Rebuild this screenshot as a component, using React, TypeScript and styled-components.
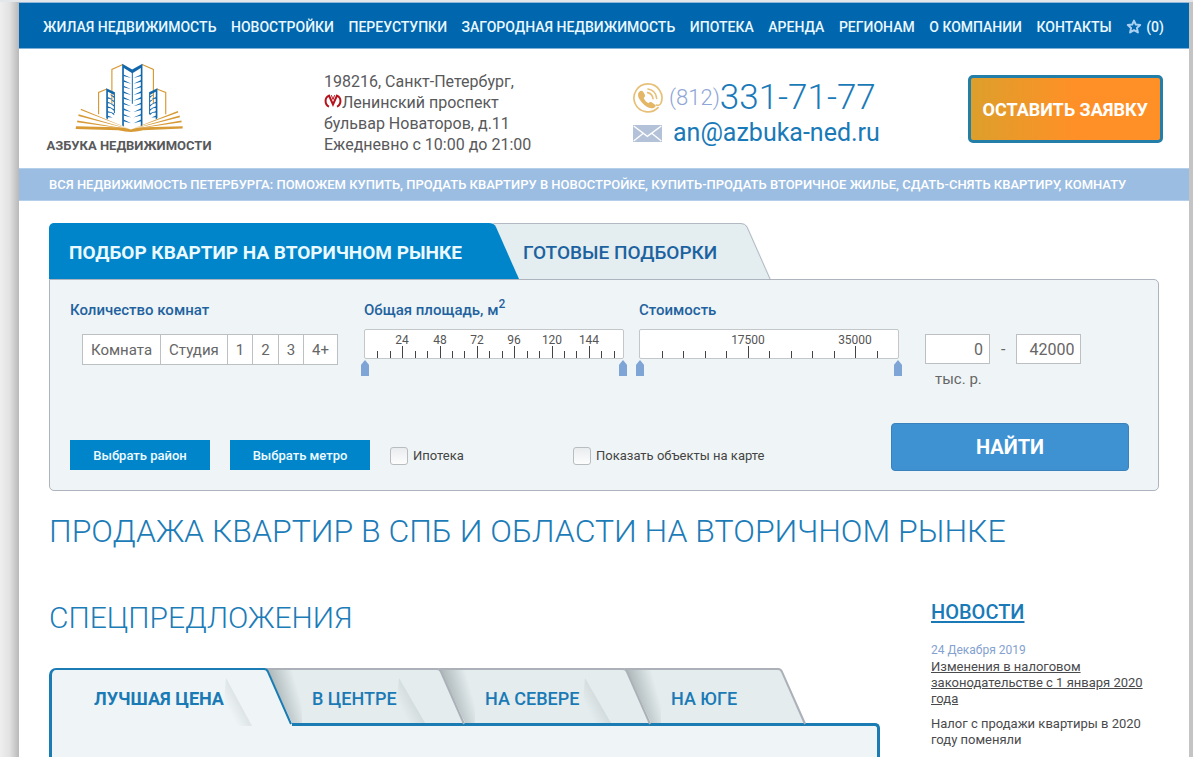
import React, { useState } from "react";
import styled, { createGlobalStyle, css } from "styled-components";

const GlobalStyle = createGlobalStyle`
  *, *::before, *::after { box-sizing: border-box; }
  body {
    margin: 0;
    background: #fff;
    color: #58595b;
    font-family: Roboto, "Liberation Sans", sans-serif;
    font-size: 16px;
  }
  button, input { font-family: inherit; }
  button { cursor: pointer; }
`;

const Shell = styled.div`
  min-height: 100vh;
  display: grid;
  grid-template-columns: 19px minmax(0, 1fr) 4px;
  border-top: 2px solid #e4e7ea;
`;

const LeftEdge = styled.div`
  background: linear-gradient(90deg, #efefef, #e2e2e2 50%, #b9b9b9);
`;

const RightEdge = styled.div`
  background: #c4c4c4;
`;

const Page = styled.div`
  display: flex;
  flex-direction: column;
  background: #fff;
`;

const Nav = styled.nav`
  display: flex;
  align-items: center;
  justify-content: space-between;
  height: 47px;
  padding: 2px 25px 0 24px;
  background: #0066ad;
  border-top: 1px solid #8fb8dc;
  border-bottom: 1px solid #7fb0d8;
`;

const NavLink = styled.a`
  display: flex;
  align-items: center;
  gap: 4px;
  color: #e9f8ff;
  font-size: 14px;
  font-weight: 500;
  text-decoration: none;
  white-space: nowrap;
`;

const Header = styled.header`
  display: grid;
  grid-template-columns: 275px 309px 1fr auto;
  align-items: start;
  height: 119px;
  padding: 14px 26px 0 30px;
`;

const Logo = styled.a`
  display: flex;
  flex-direction: column;
  align-items: center;
  width: 160px;
  gap: 4px;
  color: #58595b;
  font-size: 13px;
  line-height: 18px;
  font-weight: 700;
  text-decoration: none;
  white-space: nowrap;
`;

const Address = styled.address`
  padding-top: 8px;
  font-style: normal;
  font-size: 16px;
  line-height: 21px;
`;

const Contacts = styled.div`
  display: grid;
  grid-template-columns: 30px 1fr;
  align-items: center;
  column-gap: 6px;
  padding-top: 16px;
`;

const Phone = styled.a`
  display: flex;
  align-items: center;
  color: #1a7ab8;
  font-size: 35px;
  line-height: 38px;
  font-weight: 300;
  text-decoration: none;
  white-space: nowrap;
`;

const AreaCode = styled.span`
  color: #8fa6d6;
  font-size: 22px;
`;

const Mail = styled.a`
  padding-left: 4px;
  color: #1a7ab8;
  font-size: 25px;
  line-height: 32px;
  text-decoration: none;
`;

const RequestButton = styled.button`
  height: 68px;
  margin-top: 12px;
  padding: 0 12px;
  border: 3px solid #237fa8;
  border-radius: 5px;
  background: linear-gradient(90deg, #dd9f2b, #ff9027 55%);
  color: #fff;
  font-size: 18px;
  font-weight: 700;
  white-space: nowrap;
`;

const Strip = styled.p`
  margin: 0;
  min-height: 33px;
  padding: 0 30px;
  border-top: 1px solid #b4cfe9;
  border-bottom: 1px solid #b4cfe9;
  background: #9bbde2;
  color: #fff;
  font-size: 13px;
  line-height: 31px;
  font-weight: 500;
`;

const Content = styled.main`
  display: flex;
  flex-direction: column;
  flex: 1;
  padding: 22px 30px 0;
`;

const SearchTabs = styled.div`
  display: flex;
  height: 56px;
`;

const SearchTab = styled.button<{ $active?: boolean }>`
  position: relative;
  z-index: ${(p) => (p.$active ? 1 : 0)};
  display: flex;
  padding: 0;
  border: 0;
  background: none;
  font-size: 19px;
  font-weight: ${(p) => (p.$active ? 700 : 500)};
  line-height: 60px;
  white-space: nowrap;
  color: ${(p) => (p.$active ? "#eafaff" : "#1c62a0")};
  & + & { margin-left: -29px; }
`;

const SearchTabLabel = styled.span<{ $active?: boolean }>`
  height: 56px;
  border-radius: 5px 0 0 0;
  text-align: left;
  ${(p) =>
    p.$active
      ? css`
          width: 440px;
          padding-left: 20px;
          background: #0085cb;
        `
      : css`
          width: 251px;
          padding-left: 33px;
          background: #e4edef;
          border-top: 1px solid #b3b9c3;
          line-height: 58px;
        `}
`;

const SearchPanel = styled.form`
  display: grid;
  row-gap: 34px;
  padding: 20px 29px 19px 20px;
  border: 1px solid #aeb4bd;
  border-radius: 0 5px 5px 5px;
  background: #eff5f6;
`;

const Filters = styled.div`
  display: grid;
  grid-template-columns: 274px 260px 1fr;
  column-gap: 20px;
  & > :nth-child(3) { margin-left: -5px; }
`;

const Fieldset = styled.fieldset`
  min-width: 0;
  margin: 0;
  padding: 0;
  border: 0;
`;

const Legend = styled.legend`
  height: 29px;
  padding: 0;
  color: #1f629f;
  font-size: 15px;
  line-height: 20px;
  font-weight: 500;
  sup {
    font-size: 12px;
    line-height: 0;
    vertical-align: 7px;
  }
`;

const Rooms = styled.div`
  display: flex;
  width: max-content;
  margin: 5px 0 0 12px;
  border: 1px solid #bcc0c3;
  background: #fff;
`;

const Room = styled.button`
  height: 29px;
  padding: 0 8px;
  border: 0;
  background: #fff;
  color: #666;
  font-size: 15px;
  & + & { border-left: 1px solid #bcc0c3; }
  &[aria-pressed="true"] { background: #dbe9f6; }
`;

const PriceRow = styled.div`
  display: flex;
  gap: 26px;
`;

const RangeBox = styled.div`
  width: 260px;
`;

const Scale = styled.svg`
  display: block;
  width: 260px;
  height: 30px;
  background: #fff;
  border: 1px solid #c3c7ca;
  border-radius: 2px;
`;

const Thumbs = styled.div`
  display: grid;
  margin: 1px -3px 0;
`;

const thumb = css`
  appearance: none;
  width: 8px;
  height: 16px;
  border: 0;
  border-radius: 0;
  background: #7fa5d6;
  clip-path: polygon(0 30%, 50% 0, 100% 30%, 100% 100%, 0 100%);
  pointer-events: auto;
`;

const Thumb = styled.input`
  grid-area: 1 / 1;
  appearance: none;
  width: 100%;
  height: 16px;
  margin: 0;
  background: none;
  pointer-events: none;
  &::-webkit-slider-thumb { ${thumb} }
  &::-moz-range-thumb { ${thumb} }
`;

const PriceInputs = styled.div`
  padding-top: 5px;
`;

const PriceFields = styled.div`
  display: flex;
  align-items: center;
  gap: 11px;
  color: #666;
`;

const PriceInput = styled.input`
  width: 65px;
  height: 30px;
  padding: 0 6px;
  border: 1px solid #bcc0c3;
  background: #fff;
  color: #666;
  font-size: 16px;
  text-align: right;
`;

const Unit = styled.div`
  padding: 5px 0 0 10px;
  color: #666;
  font-size: 15px;
  line-height: 20px;
`;

const Actions = styled.div`
  display: flex;
  align-items: flex-start;
`;

const PickButton = styled.button`
  width: 140px;
  height: 30px;
  margin: 17px 20px 0 0;
  padding: 0;
  border: 0;
  background: #0085cb;
  color: #effaff;
  font-size: 13px;
  font-weight: 500;
`;

const CheckLabel = styled.label<{ $grow?: boolean }>`
  display: flex;
  align-items: center;
  gap: 5px;
  padding-top: 22px;
  color: #444;
  font-size: 13px;
  line-height: 21px;
  ${(p) => (p.$grow ? "flex: 1;" : "width: 183px;")}
`;

const Check = styled.input`
  appearance: none;
  width: 18px;
  height: 18px;
  margin: 0;
  border: 1px solid #b9bdc0;
  border-radius: 3px;
  background: linear-gradient(#e9ecee, #fdfdfd);
  &:checked { background: #7fa5d6; }
`;

const FindButton = styled.button`
  width: 238px;
  height: 48px;
  padding: 0;
  border: 1px solid #3a82bb;
  border-radius: 4px;
  background: #3e92d2;
  color: #fff;
  font-size: 20px;
  font-weight: 700;
`;

const Title = styled.h1`
  margin: 20px 0 0;
  color: #1c7cb8;
  font-size: 32px;
  line-height: 40px;
  font-weight: 300;
`;

const Columns = styled.div`
  display: grid;
  grid-template-columns: minmax(0, 831px) 228px;
  justify-content: space-between;
  flex: 1;
  margin-top: 47px;
`;

const Offers = styled.section`
  display: flex;
  flex-direction: column;
`;

const SectionTitle = styled.h2`
  margin: 0;
  color: #1c7cb8;
  font-size: 30px;
  line-height: 40px;
  font-weight: 300;
`;

const OfferTabs = styled.div`
  display: flex;
  height: 55px;
  margin-top: 30px;
`;

const OfferTab = styled.button<{ $active?: boolean; $layer: number }>`
  position: relative;
  z-index: ${(p) => p.$layer};
  display: flex;
  height: ${(p) => (p.$active ? 58 : 55)}px;
  padding: 0;
  border: 0;
  background: none;
  color: #1a7ab5;
  font-size: 18px;
  font-weight: ${(p) => (p.$active ? 700 : 500)};
  white-space: nowrap;
  & + & { margin-left: -28px; }
`;

const OfferLabel = styled.span<{ $active?: boolean; $width: number }>`
  width: ${(p) => p.$width}px;
  height: 100%;
  padding-left: ${(p) => (p.$active ? 42 : 48)}px;
  text-align: left;
  line-height: 58px;
  background: ${(p) => (p.$active ? "#eff5f6" : "#e4ecee")};
  border-top: 2px solid ${(p) => (p.$active ? "#1a7cb2" : "#acb1b9")};
  ${(p) =>
    p.$active &&
    css`
      border-left: 3px solid #1a7cb2;
      border-radius: 7px 0 0 0;
    `}
`;

const Slant = styled.svg`
  flex: none;
  overflow: visible;
  pointer-events: none;
`;

const OfferPanel = styled.div`
  flex: 1;
  min-height: 32px;
  border: 3px solid #1a7cb2;
  border-bottom: 0;
  border-radius: 0 5px 0 0;
  background: #eff5f6;
`;

const News = styled.aside`
  color: #4a4a4c;
  font-size: 13px;
  line-height: 16px;
`;

const NewsTitle = styled.h2`
  margin: 0;
  font-size: 20px;
  line-height: 28px;
  font-weight: 500;
  a {
    color: #1a7ab8;
    text-underline-offset: 2px;
  }
`;

const NewsDate = styled.time`
  display: block;
  margin-top: 15px;
  color: #84a1d0;
  font-size: 12px;
  line-height: 18px;
`;

const NewsLink = styled.a`
  color: #4a4a4c;
`;

const NewsText = styled.p`
  margin: 9px 0 0;
`;

const navItems = [
  "ЖИЛАЯ НЕДВИЖИМОСТЬ",
  "НОВОСТРОЙКИ",
  "ПЕРЕУСТУПКИ",
  "ЗАГОРОДНАЯ НЕДВИЖИМОСТЬ",
  "ИПОТЕКА",
  "АРЕНДА",
  "РЕГИОНАМ",
  "О КОМПАНИИ",
  "КОНТАКТЫ",
];

const rooms = ["Комната", "Студия", "1", "2", "3", "4+"];

const offerTabs = [
  { name: "ЛУЧШАЯ ЦЕНА", width: 215 },
  { name: "В ЦЕНТРЕ", width: 173 },
  { name: "НА СЕВЕРЕ", width: 186 },
  { name: "НА ЮГЕ", width: 155 },
];

/* Floors of a tower: short wedges that lean towards its middle rib. */
function floors(xs: number, xe: number, top: number, count: number, step: number, drop: number) {
  return Array.from({ length: count }, (_, i) => {
    const y = top + i * step;
    return `M${xs} ${y}L${xe} ${y + drop}L${xs} ${y + 5}Z`;
  }).join("");
}

function LogoMark() {
  return (
    <svg width="108" height="70" viewBox="105 38 325 210" aria-hidden="true">
      <g fill="none" stroke="#d79a35" strokeWidth="3.5">
        <path d="M216 160V57L249 42" />
        <path d="M341 160V57L307 42" />
        <path d="M176 192V126L201 116" />
        <path d="M378 192V126L351 116" />
      </g>
      <g fill="#1267ab">
        <path d="M247 40L277 57L308 40V226L303 229V53L279 68V160H276V68L252 53V229L247 226Z" />
        <path d={floors(251, 274, 72, 9, 17, 11)} />
        <path d={floors(304, 281, 72, 9, 17, 11)} />
        <path d="M199 114L225 126V188H222V133L204 124V208L199 204Z" />
        <path d={floors(223, 209, 138, 5, 13, -6)} />
        <path d={floors(203, 218, 140, 5, 14, 6)} />
        <path d="M353 114L328 126V192H331V133L348 124V208L353 204Z" />
        <path d={floors(330, 343, 138, 5, 13, -6)} />
        <path d={floors(349, 335, 140, 5, 14, 6)} />
      </g>
      <g fill="#d79a35">
        <path d="M123 175L273 238L122 179Z" />
        <path d="M116 192L273 238L115 197Z" />
        <path d="M112 211L273 238L111 216Z" />
        <path d="M108 228L230 231Q258 232 273 238Q288 232 316 231L429 228V235L310 240Q285 245 273 245Q258 245 235 240L107 236Z" />
        <path d="M414 182L273 238L416 187Z" />
        <path d="M420 196L273 238L421 201Z" />
        <path d="M425 211L273 238L426 216Z" />
      </g>
    </svg>
  );
}

function StarIcon() {
  return (
    <svg width="16" height="16" viewBox="0 0 16 16" aria-hidden="true">
      <path
        d="M8 1.6L9.8 5.6L14.2 6L10.9 8.9L11.9 13.4L8 11.1L4.1 13.4L5.1 8.9L1.8 6L6.2 5.6Z"
        fill="none"
        stroke="#a9d0f0"
        strokeWidth="2"
        strokeLinejoin="round"
      />
    </svg>
  );
}

function MetroIcon() {
  return (
    <svg width="18" height="14" viewBox="0 0 18 14" role="img" aria-label="метро">
      <path
        d="M5 12.6C.4 10.600 .4 3.400 5 1.600L9 10.500L13 1.600C17.600 3.400 17.600 10.600 13 12.600"
        fill="none"
        stroke="#b5121b"
        strokeWidth="2"
      />
      <path d="M7.400 1.200L9 5.500L10.600 1.200" fill="none" stroke="#b5121b" strokeWidth="1" />
    </svg>
  );
}

function PhoneIcon() {
  return (
    <svg width="30" height="30" viewBox="0 0 90 90" aria-hidden="true">
      <g fill="none" stroke="#e6c078" strokeLinecap="round">
        <path d="M75 74A42 42 0 1 1 84 60Q80 70 70 66" strokeWidth="5" />
        <path d="M44 29Q58 32 60 47" strokeWidth="5" />
        <path d="M45 18Q69 22 71 46" strokeWidth="5" />
      </g>
      <path
        d="M19 26Q26 20 31 27L36 36Q38 40 32 45Q35 54 46 61Q51 55 56 58L66 65Q71 70 63 74Q52 80 34 66Q14 48 15 34Q16 28 19 26Z"
        fill="#e3b766"
      />
    </svg>
  );
}

function MailIcon() {
  return (
    <svg width="29" height="17" viewBox="0 0 87 51" aria-hidden="true">
      <rect width="87" height="51" fill="#b4c2d9" />
      <path d="M2 3L43 34L85 3M2 48L31 25M85 48L56 25" fill="none" stroke="#fff" strokeWidth="4" />
    </svg>
  );
}

function SearchSlant({ active }: { active?: boolean }) {
  return (
    <Slant width="30" height="56" viewBox="0 0 30 56" aria-hidden="true">
      <path d="M0 0Q5 0 7 4L30 56H0Z" fill={active ? "#0085cb" : "#e4edef"} />
      {!active && <path d="M0 .5Q4 .5 6 4L29 56" fill="none" stroke="#b3b9c3" />}
    </Slant>
  );
}

function OfferSlant({ active, last }: { active?: boolean; last?: boolean }) {
  const h = active ? 58 : 55;
  return (
    <Slant width="28" height={h} viewBox={`0 0 28 ${h}`} aria-hidden="true">
      <defs>
        <linearGradient id="cast" gradientUnits="userSpaceOnUse" x1="6" y1="30" x2="34" y2="22">
          <stop offset="0" stopColor="#5d6a6a" stopOpacity=".5" />
          <stop offset="1" stopColor="#5d6a6a" stopOpacity="0" />
        </linearGradient>
        <linearGradient id="fold" gradientUnits="userSpaceOnUse" x1="-32" y1="48" x2="-17" y2="40">
          <stop offset="0" stopColor="#7d8888" stopOpacity="0" />
          <stop offset="1" stopColor="#7d8888" stopOpacity=".2" />
        </linearGradient>
      </defs>
      {!last && <path d="M2 2H38V55H28Z" fill="url(#cast)" />}
      <path d={`M0 0Q3 0 5 5L28 55V${h}H0Z`} fill={active ? "#eff5f6" : "#e4ecee"} />
      {!last && <path d={`M-38 10L-12 ${h}H-42Z`} fill="url(#fold)" />}
      <path
        d="M0 1Q3 1 4 4L27 56"
        fill="none"
        stroke={active ? "#1a7cb2" : "#acb1b9"}
        strokeWidth="2"
      />
    </Slant>
  );
}

type RangeProps = {
  label: string;
  max: number;
  step: number;
  major: number;
  values: [number, number];
  onChange: (v: [number, number]) => void;
};

function Range({ label, max, step, major, values, onChange }: RangeProps) {
  const ticks: number[] = [];
  for (let v = step; v < max; v += step) ticks.push(v);
  return (
    <RangeBox>
      <Scale viewBox="0 0 258 28" aria-hidden="true">
        {ticks.map((v) => {
          const x = Math.round((v / max) * 258);
          const isMajor = v % major === 0;
          return (
            <g key={v}>
              <rect x={x} y={isMajor ? 16 : 21} width="1" height={isMajor ? 12 : 7} fill="#444" />
              {isMajor && (
                <text x={x} y="14" fontSize="12" textAnchor="middle" fill="#555">
                  {v}
                </text>
              )}
            </g>
          );
        })}
      </Scale>
      <Thumbs>
        <Thumb
          type="range"
          aria-label={`${label}, от`}
          min={0}
          max={max}
          value={values[0]}
          onChange={(e) => onChange([Math.min(Number(e.target.value), values[1]), values[1]])}
        />
        <Thumb
          type="range"
          aria-label={`${label}, до`}
          min={0}
          max={max}
          value={values[1]}
          onChange={(e) => onChange([values[0], Math.max(Number(e.target.value), values[0])])}
        />
      </Thumbs>
    </RangeBox>
  );
}

export default function App() {
  const [picked, setPicked] = useState<string[]>([]);
  const [area, setArea] = useState<[number, number]>([0, 166]);
  const [price, setPrice] = useState<[number, number]>([0, 42000]);

  const toggleRoom = (room: string) =>
    setPicked((list) => (list.includes(room) ? list.filter((r) => r !== room) : [...list, room]));

  return (
    <>
      <GlobalStyle />
      <Shell>
        <LeftEdge />
        <Page>
          <Nav>
            {navItems.map((item) => (
              <NavLink key={item} href="#">
                {item}
              </NavLink>
            ))}
            <NavLink href="#" aria-label="Избранное (0)">
              <StarIcon />
              (0)
            </NavLink>
          </Nav>

          <Header>
            <Logo href="#">
              <LogoMark />
              АЗБУКА НЕДВИЖИМОСТИ
            </Logo>
            <Address>
              198216, Санкт-Петербург,
              <br />
              <MetroIcon />
              Ленинский проспект
              <br />
              бульвар Новаторов, д.11
              <br />
              Ежедневно с 10:00 до 21:00
            </Address>
            <Contacts>
              <PhoneIcon />
              <Phone href="tel:+78123317177">
                <AreaCode>(812)</AreaCode>331-71-77
              </Phone>
              <MailIcon />
              <Mail href="mailto:an@azbuka-ned.ru">an@azbuka-ned.ru</Mail>
            </Contacts>
            <RequestButton type="button">ОСТАВИТЬ ЗАЯВКУ</RequestButton>
          </Header>

          <Strip>
            ВСЯ НЕДВИЖИМОСТЬ ПЕТЕРБУРГА: ПОМОЖЕМ КУПИТЬ, ПРОДАТЬ КВАРТИРУ В НОВОСТРОЙКЕ,
            КУПИТЬ-ПРОДАТЬ ВТОРИЧНОЕ ЖИЛЬЕ, СДАТЬ-СНЯТЬ КВАРТИРУ, КОМНАТУ
          </Strip>

          <Content>
            <SearchTabs>
              <SearchTab type="button" $active>
                <SearchTabLabel $active>ПОДБОР КВАРТИР НА ВТОРИЧНОМ РЫНКЕ</SearchTabLabel>
                <SearchSlant active />
              </SearchTab>
              <SearchTab type="button">
                <SearchTabLabel>ГОТОВЫЕ ПОДБОРКИ</SearchTabLabel>
                <SearchSlant />
              </SearchTab>
            </SearchTabs>

            <SearchPanel onSubmit={(e) => e.preventDefault()}>
              <Filters>
                <Fieldset>
                  <Legend>Количество комнат</Legend>
                  <Rooms>
                    {rooms.map((room) => (
                      <Room
                        key={room}
                        type="button"
                        aria-pressed={picked.includes(room)}
                        onClick={() => toggleRoom(room)}
                      >
                        {room}
                      </Room>
                    ))}
                  </Rooms>
                </Fieldset>
                <Fieldset>
                  <Legend>
                    Общая площадь, м<sup>2</sup>
                  </Legend>
                  <Range
                    label="Общая площадь"
                    max={166}
                    step={8}
                    major={24}
                    values={area}
                    onChange={setArea}
                  />
                </Fieldset>
                <Fieldset>
                  <Legend>Стоимость</Legend>
                  <PriceRow>
                    <Range
                      label="Стоимость"
                      max={42000}
                      step={3500}
                      major={17500}
                      values={price}
                      onChange={setPrice}
                    />
                    <PriceInputs>
                      <PriceFields>
                        <PriceInput
                          aria-label="Цена от"
                          value={price[0]}
                          onChange={(e) => setPrice([Number(e.target.value) || 0, price[1]])}
                        />
                        <span>-</span>
                        <PriceInput
                          aria-label="Цена до"
                          value={price[1]}
                          onChange={(e) => setPrice([price[0], Number(e.target.value) || 0])}
                        />
                      </PriceFields>
                      <Unit>тыс. р.</Unit>
                    </PriceInputs>
                  </PriceRow>
                </Fieldset>
              </Filters>
              <Actions>
                <PickButton type="button">Выбрать район</PickButton>
                <PickButton type="button">Выбрать метро</PickButton>
                <CheckLabel>
                  <Check type="checkbox" />
                  Ипотека
                </CheckLabel>
                <CheckLabel $grow>
                  <Check type="checkbox" />
                  Показать объекты на карте
                </CheckLabel>
                <FindButton type="submit">НАЙТИ</FindButton>
              </Actions>
            </SearchPanel>

            <Title>ПРОДАЖА КВАРТИР В СПБ И ОБЛАСТИ НА ВТОРИЧНОМ РЫНКЕ</Title>

            <Columns>
              <Offers>
                <SectionTitle>СПЕЦПРЕДЛОЖЕНИЯ</SectionTitle>
                <OfferTabs>
                  {offerTabs.map((tab, i) => (
                    <OfferTab
                      key={tab.name}
                      type="button"
                      $active={i === 0}
                      $layer={offerTabs.length - i}
                    >
                      <OfferLabel $active={i === 0} $width={tab.width}>
                        {tab.name}
                      </OfferLabel>
                      <OfferSlant active={i === 0} last={i === offerTabs.length - 1} />
                    </OfferTab>
                  ))}
                </OfferTabs>
                <OfferPanel />
              </Offers>
              <News>
                <NewsTitle>
                  <a href="#">НОВОСТИ</a>
                </NewsTitle>
                <NewsDate dateTime="2019-12-24">24 Декабря 2019</NewsDate>
                <NewsLink href="#">
                  Изменения в налоговом законодательстве с 1 января 2020 года
                </NewsLink>
                <NewsText>Налог с продажи квартиры в 2020 году поменяли</NewsText>
              </News>
            </Columns>
          </Content>
        </Page>
        <RightEdge />
      </Shell>
    </>
  );
}
